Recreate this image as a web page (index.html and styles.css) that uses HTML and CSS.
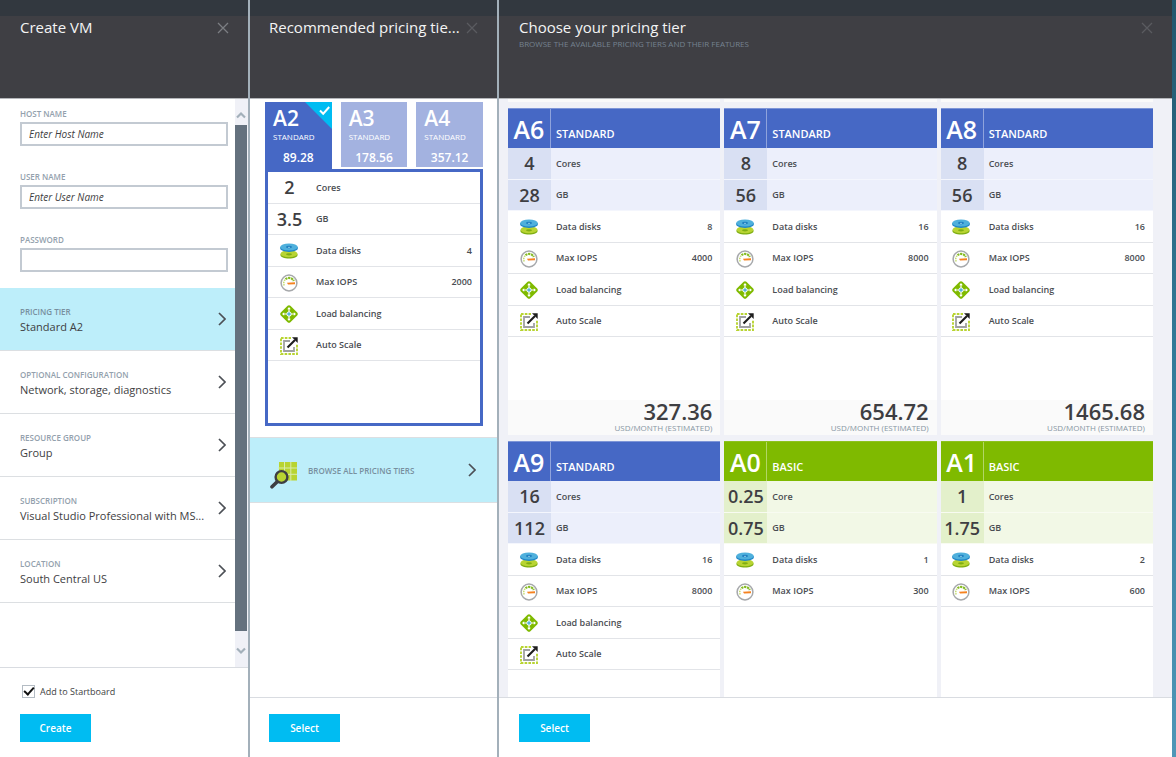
FILE: index.html
```html
<!DOCTYPE html>
<html lang="en">
<head>
<meta charset="utf-8">
<title>Create VM</title>
<link rel="stylesheet" href="styles.css">
</head>
<body>
<svg class="sprite" aria-hidden="true">
  <symbol id="close" viewBox="0 0 12 12"><path d="M1 1l10 10M11 1L1 11" fill="none" stroke="currentColor" stroke-width="1.3"/></symbol>
  <symbol id="chevron" viewBox="0 0 8 14"><path d="M1 1l6 6-6 6" fill="none" stroke="currentColor" stroke-width="1.7"/></symbol>
  <symbol id="arrow" viewBox="0 0 10 8"><path d="M1 6.5l4-4 4 4" fill="none" stroke="currentColor" stroke-width="2.2"/></symbol>
  <symbol id="disks" viewBox="0 0 18 16">
    <path d="M.5 11v1.300C.5 14 4 15.500 9 15.500s8.500-1.500 8.500-3.200V11z" fill="#7fae12"/>
    <ellipse cx="9" cy="10.800" rx="8.500" ry="3.500" fill="#b8d432"/>
    <ellipse cx="9" cy="11.300" rx="3" ry="1.100" fill="#7fae12"/>
    <path d="M.2 4v1.600C.2 7.400 4 8.900 9 8.900s8.800-1.500 8.800-3.300V4z" fill="#1f86c8"/>
    <ellipse cx="9" cy="4" rx="8.800" ry="3.500" fill="#4fb0dc"/>
    <ellipse cx="9" cy="4" rx="3" ry="1.200" fill="#1f7fc0"/>
    <ellipse cx="9" cy="4.200" rx="1.200" ry=".5" fill="#9bd3ec"/>
  </symbol>
  <symbol id="gauge" viewBox="0 0 18 18">
    <circle cx="9" cy="9" r="7.900" fill="#fff" stroke="#a6a8ab" stroke-width="1.500"/>
    <path d="M4.200 11.500A5.300 5.300 0 0 1 5.200 5.600" fill="none" stroke="#c5dd70" stroke-width="1.500" stroke-dasharray="1.500 .8"/>
    <path d="M5.500 5.300A5.200 5.200 0 0 1 13.800 7" fill="none" stroke="#86bc25" stroke-width="2.200" stroke-dasharray="2.200 .7"/>
    <path d="M7 8.800l8-.6v2l-7 .2z" fill="#f58220"/>
  </symbol>
  <symbol id="balance" viewBox="0 0 18 18">
    <path d="M9 .2q.8 0 1.400.6l6.800 6.800q1.200 1.400 0 2.800l-6.800 6.800q-1.400 1.200-2.800 0L.8 10.400q-1.200-1.400 0-2.800L7.600.8Q8.200.2 9 .2z" fill="#7fba00"/>
    <path d="M9 3v12M3 9h12" stroke="#fff" stroke-width="1.200"/>
    <path d="M9 2l1.800 2.200H7.200zM9 16l1.800-2.200H7.200zM2 9l2.200-1.800v3.600zM16 9l-2.200-1.800v3.600z" fill="#fff"/>
    <circle cx="9" cy="9" r="2.500" fill="#fff"/><circle cx="9" cy="9" r="1.800" fill="#59b4d9"/>
  </symbol>
  <symbol id="scale" viewBox="0 0 18 18">
    <path d="M1 1h16v16H1z" fill="none" stroke="#b8d432" stroke-width="1.900" stroke-dasharray="2.600 1.200"/>
    <path d="M11 0h7v7h-7z" fill="#fff"/>
    <path d="M10 4H4v10h10v-4" fill="none" stroke="#a0a1a2" stroke-width="1.800"/>
    <path d="M7.500 10.500L15 3" stroke="#1e1e1e" stroke-width="2.100"/>
    <path d="M12 .3h5.700V6z" fill="#1e1e1e"/>
  </symbol>
  <symbol id="browse" viewBox="0 0 27 27">
    <path d="M9 0h18v18.500H9z" fill="#b8d432"/>
    <path d="M14.500 0v19M20.800 0v19M8 6h19M8 12.300h19" stroke="#d9ecae" stroke-width="1"/>
    <path d="M8.500 18.500L2 24.800" stroke="#3e3e42" stroke-width="3.600" stroke-linecap="round"/>
    <circle cx="11.500" cy="15" r="5.900" fill="#b8d432" stroke="#3e3e42" stroke-width="2.400"/>
  </symbol>
</svg>

<main class="portal">
  <section class="blade blade-create">
    <header class="blade-head">
      <h1>Create VM</h1>
      <button class="close" aria-label="Close"><svg><use href="#close"/></svg></button>
    </header>
    <div class="blade-body scroller">
      <div class="form">
        <div class="field"><label for="host">HOST NAME</label><input id="host" type="text" placeholder="Enter Host Name"></div>
        <div class="field"><label for="user">USER NAME</label><input id="user" type="text" placeholder="Enter User Name"></div>
        <div class="field"><label for="pass">PASSWORD</label><input id="pass" type="password"></div>
        <button class="option selected"><span class="caption">PRICING TIER</span><span class="value">Standard A2</span><svg class="chevron"><use href="#chevron"/></svg></button>
        <button class="option"><span class="caption">OPTIONAL CONFIGURATION</span><span class="value">Network, storage, diagnostics</span><svg class="chevron"><use href="#chevron"/></svg></button>
        <button class="option"><span class="caption">RESOURCE GROUP</span><span class="value">Group</span><svg class="chevron"><use href="#chevron"/></svg></button>
        <button class="option"><span class="caption">SUBSCRIPTION</span><span class="value">Visual Studio Professional with MS...</span><svg class="chevron"><use href="#chevron"/></svg></button>
        <button class="option"><span class="caption">LOCATION</span><span class="value">South Central US</span><svg class="chevron"><use href="#chevron"/></svg></button>
      </div>
      <div class="scrollbar">
        <svg class="up"><use href="#arrow"/></svg>
        <div class="thumb"></div>
        <svg class="down"><use href="#arrow"/></svg>
      </div>
    </div>
    <footer class="blade-foot">
      <label class="pin"><input type="checkbox" checked><span>Add to Startboard</span></label>
      <button class="primary">Create</button>
    </footer>
  </section>

  <section class="blade blade-recommended">
    <header class="blade-head">
      <h1>Recommended pricing tie...</h1>
      <button class="close dim" aria-label="Close"><svg><use href="#close"/></svg></button>
    </header>
    <div class="blade-body">
      <div class="picker">
        <div class="tabs">
          <button class="tab active"><svg class="corner" viewBox="0 0 27 27"><path d="M0 0h27v27z" fill="#00bcf2"/><path d="M15 8.500l3.200 3.200 6-6.700" fill="none" stroke="#fff" stroke-width="2"/></svg><strong>A2</strong><span>STANDARD</span><b>89.28</b></button>
          <button class="tab"><strong>A3</strong><span>STANDARD</span><b>178.56</b></button>
          <button class="tab"><strong>A4</strong><span>STANDARD</span><b>357.12</b></button>
        </div>
        <div class="detail">
          <ul class="specs">
            <li><b>2</b><span>Cores</span></li>
            <li><b>3.5</b><span>GB</span></li>
            <li><svg><use href="#disks"/></svg><span>Data disks</span><em>4</em></li>
            <li><svg><use href="#gauge"/></svg><span>Max IOPS</span><em>2000</em></li>
            <li><svg><use href="#balance"/></svg><span>Load balancing</span></li>
            <li><svg><use href="#scale"/></svg><span>Auto Scale</span></li>
          </ul>
        </div>
      </div>
      <button class="browse"><svg class="browse-icon"><use href="#browse"/></svg><span>BROWSE ALL PRICING TIERS</span><svg class="chevron"><use href="#chevron"/></svg></button>
    </div>
    <footer class="blade-foot"><button class="primary">Select</button></footer>
  </section>

  <section class="blade blade-choose">
    <header class="blade-head">
      <h1>Choose your pricing tier</h1>
      <p>BROWSE THE AVAILABLE PRICING TIERS AND THEIR FEATURES</p>
      <button class="close dim" aria-label="Close"><svg><use href="#close"/></svg></button>
    </header>
    <div class="blade-body tiers">
      <div class="tail"></div><div class="tail"></div><div class="tail"></div>

      <article class="card">
        <h2><strong>A6</strong><span>STANDARD</span></h2>
        <ul class="specs">
          <li><b>4</b><span>Cores</span></li>
          <li><b>28</b><span>GB</span></li>
          <li><svg><use href="#disks"/></svg><span>Data disks</span><em>8</em></li>
          <li><svg><use href="#gauge"/></svg><span>Max IOPS</span><em>4000</em></li>
          <li><svg><use href="#balance"/></svg><span>Load balancing</span></li>
          <li><svg><use href="#scale"/></svg><span>Auto Scale</span></li>
        </ul>
        <div class="price"><strong>327.36</strong><span>USD/MONTH (ESTIMATED)</span></div>
      </article>
      <article class="card">
        <h2><strong>A7</strong><span>STANDARD</span></h2>
        <ul class="specs">
          <li><b>8</b><span>Cores</span></li>
          <li><b>56</b><span>GB</span></li>
          <li><svg><use href="#disks"/></svg><span>Data disks</span><em>16</em></li>
          <li><svg><use href="#gauge"/></svg><span>Max IOPS</span><em>8000</em></li>
          <li><svg><use href="#balance"/></svg><span>Load balancing</span></li>
          <li><svg><use href="#scale"/></svg><span>Auto Scale</span></li>
        </ul>
        <div class="price"><strong>654.72</strong><span>USD/MONTH (ESTIMATED)</span></div>
      </article>
      <article class="card">
        <h2><strong>A8</strong><span>STANDARD</span></h2>
        <ul class="specs">
          <li><b>8</b><span>Cores</span></li>
          <li><b>56</b><span>GB</span></li>
          <li><svg><use href="#disks"/></svg><span>Data disks</span><em>16</em></li>
          <li><svg><use href="#gauge"/></svg><span>Max IOPS</span><em>8000</em></li>
          <li><svg><use href="#balance"/></svg><span>Load balancing</span></li>
          <li><svg><use href="#scale"/></svg><span>Auto Scale</span></li>
        </ul>
        <div class="price"><strong>1465.68</strong><span>USD/MONTH (ESTIMATED)</span></div>
      </article>
      <article class="card">
        <h2><strong>A9</strong><span>STANDARD</span></h2>
        <ul class="specs">
          <li><b>16</b><span>Cores</span></li>
          <li><b>112</b><span>GB</span></li>
          <li><svg><use href="#disks"/></svg><span>Data disks</span><em>16</em></li>
          <li><svg><use href="#gauge"/></svg><span>Max IOPS</span><em>8000</em></li>
          <li><svg><use href="#balance"/></svg><span>Load balancing</span></li>
          <li><svg><use href="#scale"/></svg><span>Auto Scale</span></li>
        </ul>
      </article>
      <article class="card basic">
        <h2><strong>A0</strong><span>BASIC</span></h2>
        <ul class="specs short">
          <li><b>0.25</b><span>Core</span></li>
          <li><b>0.75</b><span>GB</span></li>
          <li><svg><use href="#disks"/></svg><span>Data disks</span><em>1</em></li>
          <li><svg><use href="#gauge"/></svg><span>Max IOPS</span><em>300</em></li>
        </ul>
      </article>
      <article class="card basic">
        <h2><strong>A1</strong><span>BASIC</span></h2>
        <ul class="specs short">
          <li><b>1</b><span>Cores</span></li>
          <li><b>1.75</b><span>GB</span></li>
          <li><svg><use href="#disks"/></svg><span>Data disks</span><em>2</em></li>
          <li><svg><use href="#gauge"/></svg><span>Max IOPS</span><em>600</em></li>
        </ul>
      </article>
    </div>
    <footer class="blade-foot"><button class="primary">Select</button></footer>
  </section>
</main>
</body>
</html>
```
FILE: styles.css
```css
* { box-sizing: border-box; margin: 0; padding: 0; }
body { font-family: "Open Sans", "Noto Sans", sans-serif; font-size: 11px; color: #3e3e42; }
button { font: inherit; color: inherit; border: 0; background: none; text-align: left; cursor: pointer; }
ul { list-style: none; }
svg { display: block; }
.sprite { position: absolute; width: 0; height: 0; }

.portal { display: flex; height: 100vh; overflow: hidden; padding-right: 4px; background: linear-gradient(#22566c, #347d9b 50%, #4f97b7); }
.blade { display: flex; flex-direction: column; min-width: 0; background: #fff; }
.blade-create { flex: 0 0 250px; border-right: 2px solid #a3b0ba; }
.blade-recommended { flex: 0 0 249px; border-right: 2px solid #a3b0ba; }
.blade-choose { flex: 1; }

.blade-head { display: grid; grid-template-columns: 1fr auto; align-content: start; flex: 0 0 99px; padding: 16px 19px 0 20px; background: linear-gradient(#32383f 16px, #3f3f44 16px); border-bottom: 1px solid #b4b6ba; color: #f4f4f4; }
.blade-head h1 { font-size: 15px; line-height: 23px; font-weight: 400; white-space: nowrap; }
.blade-head p { grid-row: 2; font-size: 8px; line-height: 10px; color: #75828f; }
.close { align-self: center; color: #7c7e83; }
.close.dim { color: #5a5b60; }
.close svg { width: 12px; height: 12px; }

.blade-body { flex: 1; min-height: 0; overflow: hidden; }
.blade-foot { padding: 16px 20px 15px; border-top: 1px solid #d9dce1; }
.blade-recommended .blade-head, .blade-recommended .blade-foot { padding-left: 19px; }
.primary { display: block; width: 71px; line-height: 28px; background: #00bcf2; color: #fff; font-size: 10px; font-weight: 600; text-align: center; }
.pin { display: flex; align-items: center; gap: 5px; height: 14px; margin: 0 0 16px 2px; font-size: 9px; }
.pin input { appearance: none; width: 13px; height: 13px; border: 1px solid #b4bcc4; display: grid; place-items: center; }
.pin input:checked::after { content: ""; width: 4px; height: 8px; margin-top: -2px; border: solid #111; border-width: 0 2px 2px 0; transform: rotate(42deg); }

.scroller { display: flex; }
.form { flex: 1; min-width: 0; }
.field { height: 63px; padding: 9px 7px 0 20px; }
.field label, .caption { display: block; font-size: 8px; line-height: 12px; font-weight: 600; color: #93a1ad; }
.field input { display: block; width: 100%; height: 24px; margin-top: 2px; padding: 0 7px; border: 2px solid #c3cad2; background: #fff; font: 10px "Open Sans", sans-serif; color: #3e3e42; }
.field input::placeholder { font-style: italic; color: #3e3e42; opacity: 1; }
.option { display: grid; grid-template-columns: 1fr 8px; align-content: center; align-items: center; width: 100%; height: 63px; padding: 4px 9px 0 20px; border-bottom: 1px solid #dcdfe2; }
.option.selected { background: #bdeefa; }
.option.selected .caption { color: #78909f; }
.option .value { grid-row: 2; font-size: 11px; line-height: 18px; white-space: nowrap; }
.option .chevron { grid-area: 1 / 2 / 3 / 3; margin-bottom: 4px; }
.chevron { width: 8px; height: 14px; color: #4c5056; }
.scrollbar { display: flex; flex-direction: column; align-items: center; width: 13px; padding: 12px 1px 12px 0; background: #f0f1f7; color: #a3b0ba; }
.scrollbar svg { width: 10px; height: 8px; flex: none; }
.scrollbar .down { transform: rotate(180deg); }
.thumb { flex: 1; width: 100%; margin: 6px 0 16px; background: #64717e; }

.picker { padding: 3px 14px 11px 15px; }
.tabs { display: grid; grid-template-columns: repeat(3, 1fr); gap: 9px; }
.tab { position: relative; height: 65px; margin-bottom: 2px; padding: 3px 8px 0; background: #a3b2e0; color: #fff; }
.tab.active { height: 67px; margin: 0; padding-bottom: 2px; background: #4668c5; }
.tab strong { display: block; font-size: 21px; line-height: 26px; font-weight: 600; }
.tab span { display: block; font-size: 8px; line-height: 12px; }
.tab b { display: block; margin-top: 6px; font-size: 12px; line-height: 18px; font-weight: 600; text-align: center; }
.corner { position: absolute; top: 0; right: 0; width: 27px; height: 27px; }
.detail { min-height: 257px; border: 3px solid #4668c5; }

.specs { display: grid; grid-template-rows: repeat(6, 1fr); height: 189px; }
.specs.short { grid-template-rows: repeat(4, 1fr); height: 126px; }
.specs li { display: grid; grid-template-columns: 43px 1fr auto; align-items: center; border-bottom: 1px solid #e2e4e8; padding-right: 8px; font-size: 9px; font-weight: 600; color: #4a4d52; }
.specs b { font-size: 18px; line-height: 28px; font-weight: 600; text-align: center; color: #3e3e42; }
.specs svg { width: 18px; height: 18px; margin: 2px 2px 0 0; justify-self: center; }
.specs span { padding-left: 5px; }
.specs em { font-style: normal; }

.browse { display: grid; grid-template-columns: 38px 1fr 8px; align-items: center; width: 100%; height: 66px; padding: 0 21px 0 20px; border: solid #dcdfe2; border-width: 1px 0; background: #bdeefa; font-size: 8px; font-weight: 600; color: #78909f; }
.browse-icon { width: 27px; height: 27px; margin-top: 10px; }

.tiers { display: grid; grid-template-columns: repeat(3, 1fr); grid-template-rows: 3px; align-content: start; gap: 6px 4px; padding: 0 19px 0 9px; background: #f0f1f7; }
.tail { background: #fafafa; }
.card { display: flex; flex-direction: column; min-height: 327px; background: #fff; }
.card h2 { display: grid; grid-template-columns: 43px 1fr; height: 40px; background: #4668c5; color: #fff; border-top: 1px solid #7e95d7; }
.card h2 strong { border-right: 1px solid #8fa3dc; font-size: 25px; line-height: 40px; font-weight: 600; text-align: center; }
.card h2 span { padding: 10px 0 0 5px; font-size: 11px; line-height: 30px; font-weight: 600; }
.card li:nth-child(-n+2) { background: linear-gradient(to right, #d9e0f3 43px, #eceffb 43px); border-color: #f4f6fd; }
.card.basic h2 { background: #7fba00; border-color: #8dc21f; }
.card.basic h2 strong { border-color: #b2d666; }
.card.basic li:nth-child(-n+2) { background: linear-gradient(to right, #e3f0cb 43px, #f2f8e6 43px); border-color: #f8fbf1; }
.price { display: flex; flex-direction: column; align-items: flex-end; gap: 2px; height: 35px; margin-top: auto; padding: 0 8px; background: #fafafa; }
.price strong { font-size: 22px; line-height: 22px; font-weight: 600; }
.price span { font-size: 8px; line-height: 8px; color: #8796a3; }
```
